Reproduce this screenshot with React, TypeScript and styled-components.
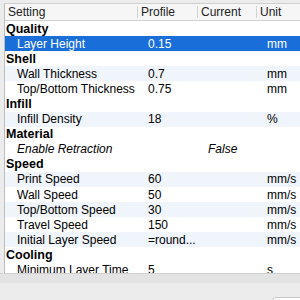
import styled, { createGlobalStyle } from "styled-components";

const GlobalStyle = createGlobalStyle`
  html, body {
    margin: 0;
    padding: 0;
    background: #ececec;
    font-family: "Liberation Sans", Arial, sans-serif;
  }
`;

type Row =
  | { kind: "group"; name: string }
  | {
      kind: "item";
      name: string;
      profile?: string;
      current?: string;
      unit?: string;
      italic?: boolean;
      striped?: boolean;
      selected?: boolean;
    };

const rows: Row[] = [
  { kind: "group", name: "Quality" },
  { kind: "item", name: "Layer Height", profile: "0.15", unit: "mm", selected: true },
  { kind: "group", name: "Shell" },
  { kind: "item", name: "Wall Thickness", profile: "0.7", unit: "mm", striped: true },
  { kind: "item", name: "Top/Bottom Thickness", profile: "0.75", unit: "mm" },
  { kind: "group", name: "Infill" },
  { kind: "item", name: "Infill Density", profile: "18", unit: "%", striped: true },
  { kind: "group", name: "Material" },
  { kind: "item", name: "Enable Retraction", current: "False", italic: true },
  { kind: "group", name: "Speed" },
  { kind: "item", name: "Print Speed", profile: "60", unit: "mm/s", striped: true },
  { kind: "item", name: "Wall Speed", profile: "50", unit: "mm/s" },
  { kind: "item", name: "Top/Bottom Speed", profile: "30", unit: "mm/s", striped: true },
  { kind: "item", name: "Travel Speed", profile: "150", unit: "mm/s" },
  { kind: "item", name: "Initial Layer Speed", profile: "=round...", unit: "mm/s", striped: true },
  { kind: "group", name: "Cooling" },
  { kind: "item", name: "Minimum Layer Time", profile: "5", unit: "s" },
];

const COLS = "132px 60px 59px 44px 1fr";

const Window = styled.div`
  width: 300px;
  height: 300px;
  overflow: hidden;
  background: #ececec;
`;

const TableFrame = styled.div`
  margin: 3px 0 0 4px;
  height: 269px;
  overflow: hidden;
  background: #ffffff;
  border-left: 1px solid #bdbdbd;
  border-top: 1px solid #cfcfcf;
`;

const Header = styled.div`
  display: grid;
  grid-template-columns: ${COLS};
  height: 16px;
  background: #f6f6f6;
  border-bottom: 1px solid #d2d2d2;
  font-size: 12px;
  color: #222;
`;

const HeaderCell = styled.div<{ $first?: boolean }>`
  display: flex;
  align-items: center;
  padding-left: ${(p) => (p.$first ? 3 : 4)}px;
  white-space: nowrap;
  position: relative;
  &::before {
    content: "";
    display: ${(p) => (p.$first ? "none" : "block")};
    position: absolute;
    left: 0;
    top: 2px;
    bottom: 2px;
    width: 1px;
    background: #d4d4d4;
  }
`;

const RowLine = styled.div<{ $striped?: boolean; $selected?: boolean }>`
  display: grid;
  grid-template-columns: ${COLS};
  height: 15.1px;
  align-items: center;
  font-size: 12px;
  white-space: nowrap;
  background: ${(p) => (p.$selected ? "#1a6ed9" : p.$striped ? "#f0f4fb" : "#ffffff")};
  color: ${(p) => (p.$selected ? "#ffffff" : "#000000")};
`;

const GroupLabel = styled.div`
  grid-column: 1 / -1;
  padding-left: 1px;
  font-weight: bold;
  font-size: 12.5px;
`;

const NameCell = styled.div<{ $italic?: boolean }>`
  padding-left: 12px;
  font-style: ${(p) => (p.$italic ? "italic" : "normal")};
  overflow: hidden;
`;

const ValueCell = styled.div<{ $italic?: boolean }>`
  padding-left: 11px;
  font-style: ${(p) => (p.$italic ? "italic" : "normal")};
  overflow: hidden;
`;

const BottomBand = styled.div`
  height: 9px;
  background: #e3e3e3;
  border-top: 1px solid #d0d0d0;
`;

const Footer = styled.div`
  box-sizing: border-box;
  height: 18px;
  padding-top: 14px;
  overflow: hidden;
  display: flex;
  justify-content: flex-end;
`;

const Button = styled.div`
  flex-shrink: 0;
  box-sizing: border-box;
  width: 60px;
  height: 22px;
  margin-right: -32px;
  background: #ffffff;
  border: 1px solid #c4c4c4;
  border-radius: 4px;
  font-size: 12px;
  padding: 3px 0 0 10px;
  color: #000;
`;

export default function App() {
  return (
    <>
      <GlobalStyle />
      <Window>
        <TableFrame>
          <Header>
            <HeaderCell $first>Setting</HeaderCell>
            <HeaderCell>Profile</HeaderCell>
            <HeaderCell>Current</HeaderCell>
            <HeaderCell>Unit</HeaderCell>
            <HeaderCell />
          </Header>
          {rows.map((r) =>
            r.kind === "group" ? (
              <RowLine key={r.name}>
                <GroupLabel>{r.name}</GroupLabel>
              </RowLine>
            ) : (
              <RowLine key={r.name} $striped={r.striped} $selected={r.selected}>
                <NameCell $italic={r.italic}>{r.name}</NameCell>
                <ValueCell>{r.profile}</ValueCell>
                <ValueCell $italic={r.italic}>{r.current}</ValueCell>
                <ValueCell>{r.unit}</ValueCell>
                <div />
              </RowLine>
            )
          )}
        </TableFrame>
        <BottomBand />
        <Footer>
          <Button>Close</Button>
        </Footer>
      </Window>
    </>
  );
}
